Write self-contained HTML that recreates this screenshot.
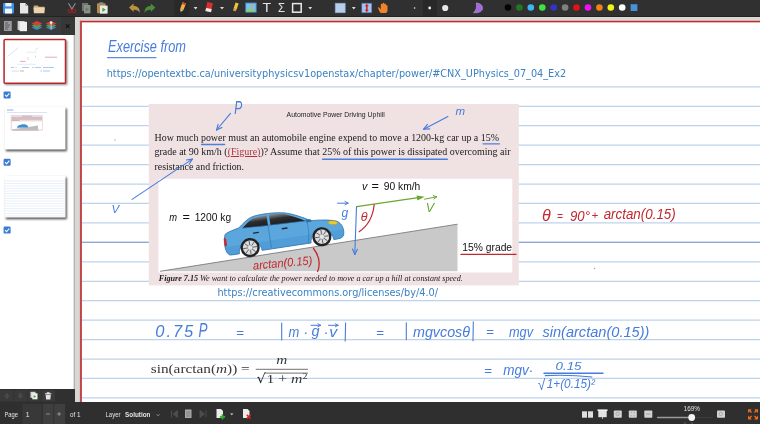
<!DOCTYPE html>
<html><head><meta charset="utf-8"><title>Xournal++</title>
<style>
*{box-sizing:border-box;margin:0;padding:0}
html,body{width:760px;height:424px;overflow:hidden;background:#d8d7d3;font-family:"Liberation Sans",sans-serif}
#app{position:relative;width:760px;height:424px;overflow:hidden}
.abs{position:absolute}
svg.abs{filter:blur(0.4px)}
#topbar{left:0;top:0;width:760px;height:17px;background:#303030;border-bottom:1px solid #232323}
#sidehead{left:0;top:17px;width:75px;height:18px;background:#3c3c3c}
#sideclose{left:61px;top:17px;width:14px;height:18px;background:#373737}
#sidebody{left:0;top:35px;width:74px;height:354px;background:#fff}
#sidefoot{left:0;top:389px;width:75px;height:14px;background:#303030}
#botbar{left:0;top:402px;width:760px;height:22px;background:#2f2f2f}
#page{left:81px;top:21.5px;width:700px;height:420px;background:#fff}
.rule{position:absolute;left:82px;width:678px;height:1.4px;background:#b5d1ec}
.ui{position:absolute;color:#dcdcdc;font-size:7px;line-height:1;white-space:nowrap}
</style></head><body><div id="app">
<div class="abs" id="page"></div>
<svg class="abs" style="left:0;top:0" width="760" height="424" viewBox="0 0 760 424"><rect x="79.9" y="20.8" width="700" height="1.55" fill="#c8282d"/><rect x="79.9" y="20.8" width="2.05" height="420" fill="#c2464a"/><g stroke="#bdd3ec" stroke-width="1.25"><path d="M82 86.85H760"/><path d="M82 106.29H760"/><path d="M82 125.73H760"/><path d="M82 145.17H760"/><path d="M82 164.61H760"/><path d="M82 184.05H760"/><path d="M82 203.49H760"/><path d="M82 222.93H760"/><path d="M82 242.37H760"/><path d="M82 261.81H760"/><path d="M82 281.25H760"/><path d="M82 300.69H760"/><path d="M82 320.13H760"/><path d="M82 339.57H760"/><path d="M82 359.01H760"/><path d="M82 378.45H760"/><path d="M82 397.89H760"/><path d="M82 242.3H760" stroke="#7d9dcd" stroke-width="1.1"/></g></svg>
<svg class="abs" style="left:0;top:0" width="760" height="424" viewBox="0 0 760 424">
<text x="108" y="51.7" font-size="16" font-family='"Liberation Sans",sans-serif' fill="#467cdc" textLength="78" lengthAdjust="spacingAndGlyphs" font-style="italic">Exercise from</text>
<line x1="107.5" y1="57.6" x2="156" y2="57.6" stroke="#5a8be0" stroke-width="1.2" stroke-linecap="round"/>
<text x="106.7" y="77" font-size="10" font-family='"DejaVu Sans","Liberation Sans",sans-serif' fill="#3a82c4" textLength="459.5" lengthAdjust="spacingAndGlyphs">https://opentextbc.ca/universityphysicsv1openstax/chapter/power/#CNX_UPhysics_07_04_Ex2</text>
<rect x="148.8" y="104" width="370" height="181.400" fill="#f0e1e3"/>
<rect x="158.5" y="178.7" width="353.8" height="93.8" fill="#ffffff"/>
<text x="286.6" y="117.4" font-size="6.9" font-family='"Liberation Sans",sans-serif' fill="#222" textLength="98.2" lengthAdjust="spacingAndGlyphs">Automotive Power Driving Uphill</text>
<text x="154.5" y="140.7" font-size="10" font-family='"Liberation Serif",serif' fill="#1a1a1a" textLength="344.5" lengthAdjust="spacingAndGlyphs">How much power must an automobile engine expend to move a 1200-kg car up a 15%</text>
<text x="154.5" y="155" font-size="10" font-family='"Liberation Serif",serif' fill="#1a1a1a" textLength="356" lengthAdjust="spacingAndGlyphs">grade at 90 km/h (<tspan fill="#a8363e" text-decoration="underline">(Figure)</tspan>)? Assume that 25% of this power is dissipated overcoming air</text>
<text x="154.5" y="169.7" font-size="10" font-family='"Liberation Serif",serif' fill="#1a1a1a" textLength="89.5" lengthAdjust="spacingAndGlyphs">resistance and friction.</text>
<line x1="201.6" y1="144.5" x2="224.7" y2="144.5" stroke="#4a80dd" stroke-width="1.4" stroke-linecap="round"/>
<line x1="483" y1="143.8" x2="499.5" y2="143.8" stroke="#4a80dd" stroke-width="1.3" stroke-linecap="round"/>
<line x1="322.6" y1="159.2" x2="447.4" y2="159.2" stroke="#4a80dd" stroke-width="1.4" stroke-linecap="round"/>
<polygon points="160,271.3 457.5,224.2 457.5,271.3" fill="#c9c9c9"/>
<polyline points="160,271.3 457.5,224.2" fill="none" stroke="#6f6f6f" stroke-width="0.8"/>
<g transform="translate(250.1 247.6) rotate(-8.6)">
<defs><linearGradient id="wg" x1="0" y1="0" x2="0" y2="1"><stop offset="0" stop-color="#8a8f94"/><stop offset="0.45" stop-color="#2b2d30"/><stop offset="1" stop-color="#1b1c1e"/></linearGradient></defs>
<path d="M-22.5 3 C-25.5 0 -25.5 -12 -22.5 -17 C-19 -19 -13 -20 -8.5 -21 C-3 -25 1 -28.500 6 -30 C14 -32 30 -31.300 40 -29 C47 -27 56 -22.500 64 -17.5 C74 -17 84 -15.5 90 -13 C94.5 -10 96 -4 94.5 1 C94 3.5 91 4.5 88 4.5 L84 4.5 C84 -9 61 -9 61 4.5 L11.5 4.5 C11.5 -9 -11.5 -9 -11.5 4.5 L-19 4.5 C-21 4.5 -22 4 -22.5 3 Z" fill="#5ba7dd" stroke="#2f74ae" stroke-width="0.8"/>
<path d="M-24.3 -4 L95.3 -4 L94.5 1.5 C93.5 4 91 4.5 88 4.5 L84 4.5 C84 -9 61 -9 61 4.5 L11.5 4.5 C11.5 -9 -11.5 -9 -11.5 4.5 L-19 4.5 C-22 4.5 -24 3 -24.3 -4 Z" fill="#3f8fcc" opacity="0.38"/>
<path d="M-4.5 -20.5 C0 -24 3.5 -27.200 7.5 -28.500 L21 -29.700 L21 -19 Z" fill="url(#wg)"/>
<path d="M23.5 -29.800 C31 -30 37 -28.800 40.5 -27.300 C46 -25.300 53 -21.500 58.5 -18 L23.5 -19 Z" fill="url(#wg)"/>
<path d="M21 -19 L21 3.5 M-5 -20.3 L60 -18 M60 -18 C61 -8 60 -2 58 4" fill="none" stroke="#2f74ae" stroke-width="0.6"/>
<rect x="5" y="-14.5" width="6" height="1.4" rx="0.5" fill="#1c2a38"/>
<rect x="34" y="-14.5" width="6" height="1.4" rx="0.5" fill="#1c2a38"/>
<path d="M59 -19.5 l5 0.6 l1 2.4 l-5.5 0z" fill="#2b6fa8"/>
<ellipse cx="85.5" cy="-12.3" rx="4.6" ry="1.9" fill="#f2c928" stroke="#b98d12" stroke-width="0.4" transform="rotate(12 85.5 -12.3)"/>
<rect x="-24.8" y="-13" width="2.4" height="8" rx="1" fill="#cc2b2b"/>
<g>
<circle cx="0" cy="0" r="9.6" fill="#222325"/>
<circle cx="0" cy="0" r="7.200" fill="#dcdddf"/>
<g stroke="#5a5b5e" stroke-width="0.900"><path d="M0 -7V7M-7 0H7M-5 -5L5 5M-5 5L5 -5"/></g>
<circle cx="0" cy="0" r="2.600" fill="#e4e4e6" stroke="#88898b" stroke-width="0.500"/>
</g>
<g transform="translate(72.6 0)">
<circle cx="0" cy="0" r="9.6" fill="#222325"/>
<circle cx="0" cy="0" r="7.200" fill="#dcdddf"/>
<g stroke="#5a5b5e" stroke-width="0.900"><path d="M0 -7V7M-7 0H7M-5 -5L5 5M-5 5L5 -5"/></g>
<circle cx="0" cy="0" r="2.600" fill="#e4e4e6" stroke="#88898b" stroke-width="0.500"/>
</g>
</g>

<text x="169.2" y="220.8" font-size="10.3" font-family='"Liberation Sans",sans-serif' fill="#111" textLength="7.8" lengthAdjust="spacingAndGlyphs" font-style="italic">m</text>
<text x="182.6" y="220.8" font-size="10.3" font-family='"Liberation Sans",sans-serif' fill="#111" textLength="7.4" lengthAdjust="spacingAndGlyphs">=</text>
<text x="194.7" y="220.8" font-size="10.3" font-family='"Liberation Sans",sans-serif' fill="#111" textLength="36.4" lengthAdjust="spacingAndGlyphs">1200 kg</text>
<text x="362" y="189.9" font-size="10.3" font-family='"Liberation Sans",sans-serif' fill="#111" textLength="5.4" lengthAdjust="spacingAndGlyphs" font-style="italic">v</text>
<text x="371.6" y="189.9" font-size="10.3" font-family='"Liberation Sans",sans-serif' fill="#111" textLength="7.4" lengthAdjust="spacingAndGlyphs">=</text>
<text x="383.7" y="189.9" font-size="10.3" font-family='"Liberation Sans",sans-serif' fill="#111" textLength="36.6" lengthAdjust="spacingAndGlyphs">90 km/h</text>
<text x="462.3" y="251.1" font-size="10.3" font-family='"Liberation Sans",sans-serif' fill="#111" textLength="49.8" lengthAdjust="spacingAndGlyphs">15% grade</text>
<line x1="461" y1="254.4" x2="516" y2="254.4" stroke="#c3272f" stroke-width="1.3" stroke-linecap="round"/>
<text x="158.8" y="280.7" font-size="8.15" font-family='"Liberation Serif",serif' fill="#1a1a1a" font-style="italic" textLength="304" lengthAdjust="spacingAndGlyphs"><tspan font-weight="bold">Figure 7.15</tspan> We want to calculate the power needed to move a car up a hill at constant speed.</text>
<text x="217.4" y="295.6" font-size="10" font-family='"DejaVu Sans","Liberation Sans",sans-serif' fill="#3a82c4" textLength="220.6" lengthAdjust="spacingAndGlyphs">https://creativecommons.org/licenses/by/4.0/</text>
<line x1="356.6" y1="206.7" x2="420" y2="197.4" stroke="#6aa72f" stroke-width="1.3" stroke-linecap="round"/>
<polygon points="424.6,196.7 416.6,195.4 417.4,200.6" fill="#6aa72f"/>
<text x="425.8" y="211.6" font-size="12.5" font-family='"Liberation Sans",sans-serif' fill="#6aa72f" font-style="italic">V</text>
<line x1="424.6" y1="199.2" x2="436.6" y2="196.8" stroke="#6aa72f" stroke-width="1.0" stroke-linecap="round"/>
<line x1="436.6" y1="196.8" x2="433.3" y2="195.7" stroke="#6aa72f" stroke-width="1.0" stroke-linecap="round"/>
<line x1="436.6" y1="196.8" x2="434.0" y2="199.1" stroke="#6aa72f" stroke-width="1.0" stroke-linecap="round"/>
<line x1="356.5" y1="206.7" x2="354.8" y2="254.5" stroke="#467cdc" stroke-width="1.1" stroke-linecap="round"/>
<line x1="354.8" y1="254.5" x2="357.5" y2="249.2" stroke="#467cdc" stroke-width="1.1" stroke-linecap="round"/>
<line x1="354.8" y1="254.5" x2="352.5" y2="249.0" stroke="#467cdc" stroke-width="1.1" stroke-linecap="round"/>
<line x1="337.6" y1="203.2" x2="348" y2="203.2" stroke="#467cdc" stroke-width="1.0" stroke-linecap="round"/>
<line x1="348" y1="203.2" x2="345.0" y2="201.4" stroke="#467cdc" stroke-width="1.0" stroke-linecap="round"/>
<line x1="348" y1="203.2" x2="345.0" y2="204.9" stroke="#467cdc" stroke-width="1.0" stroke-linecap="round"/>
<text x="341.5" y="217.3" font-size="12" font-family='"Liberation Sans",sans-serif' fill="#467cdc" font-style="italic">g</text>
<text x="360.7" y="221.3" font-size="12.5" font-family='"Liberation Sans",sans-serif' fill="#c3272f" font-style="italic">θ</text>
<path d="M374.2 204.3 Q372.5 223 358.8 232" fill="none" stroke="#c3272f" stroke-width="1.2"/>
<text x="253.3" y="269.7" font-size="12" font-family='"Liberation Sans",sans-serif' fill="#c3272f" textLength="59.5" lengthAdjust="spacingAndGlyphs" font-style="italic" transform="translate(253.3 269.7) rotate(-5.2) skewX(0) translate(-253.3 -269.7)">arctan(0.15)</text>
<path d="M313.2 248 Q322.5 260 317.4 272" fill="none" stroke="#c3272f" stroke-width="1.3"/>
<circle cx="114.9" cy="139.9" r="0.7" fill="#8aa0c8"/><circle cx="594.5" cy="268.5" r="0.7" fill="#8aa0c8"/>
<text x="234.3" y="113.8" font-size="18" font-family='"Liberation Sans",sans-serif' fill="#467cdc" textLength="8" lengthAdjust="spacingAndGlyphs" font-style="italic">P</text>
<line x1="230.5" y1="113.4" x2="216.6" y2="130" stroke="#467cdc" stroke-width="1.1" stroke-linecap="round"/>
<line x1="216.6" y1="130" x2="222.0" y2="127.5" stroke="#467cdc" stroke-width="1.1" stroke-linecap="round"/>
<line x1="216.6" y1="130" x2="218.1" y2="124.2" stroke="#467cdc" stroke-width="1.1" stroke-linecap="round"/>
<text x="455.5" y="115.3" font-size="11.5" font-family='"Liberation Sans",sans-serif' fill="#467cdc" font-style="italic">m</text>
<line x1="447.9" y1="116.6" x2="423.7" y2="129.2" stroke="#467cdc" stroke-width="1.1" stroke-linecap="round"/>
<line x1="423.7" y1="129.2" x2="429.7" y2="128.9" stroke="#467cdc" stroke-width="1.1" stroke-linecap="round"/>
<line x1="423.7" y1="129.2" x2="427.4" y2="124.4" stroke="#467cdc" stroke-width="1.1" stroke-linecap="round"/>
<text x="111.5" y="213.2" font-size="11.5" font-family='"Liberation Sans",sans-serif' fill="#467cdc" font-style="italic">V</text>
<line x1="132.1" y1="199.4" x2="192.3" y2="159.1" stroke="#467cdc" stroke-width="1.1" stroke-linecap="round"/>
<line x1="192.3" y1="159.1" x2="186.4" y2="160.0" stroke="#467cdc" stroke-width="1.1" stroke-linecap="round"/>
<line x1="192.3" y1="159.1" x2="189.2" y2="164.2" stroke="#467cdc" stroke-width="1.1" stroke-linecap="round"/>
<text x="542" y="220.5" font-size="16" font-family='"Liberation Sans",sans-serif' fill="#c3272f" font-style="italic">θ</text>
<text x="557" y="220" font-size="10" font-family='"Liberation Sans",sans-serif' fill="#c3272f" font-style="italic">=</text>
<text x="570" y="221" font-size="15.5" font-family='"Liberation Sans",sans-serif' fill="#c3272f" textLength="20" lengthAdjust="spacingAndGlyphs" font-style="italic">90°</text>
<text x="591.5" y="219.3" font-size="11.5" font-family='"Liberation Sans",sans-serif' fill="#c3272f" font-style="italic">+</text>
<text x="603.7" y="219.3" font-size="14.5" font-family='"Liberation Sans",sans-serif' fill="#c3272f" textLength="72" lengthAdjust="spacingAndGlyphs" font-style="italic">arctan(0.15)</text>
<text x="155.3" y="336.8" font-size="16.5" font-family='"Liberation Sans",sans-serif' fill="#467cdc" textLength="38" lengthAdjust="spacing" font-style="italic">0.75</text>
<text x="198.5" y="337.4" font-size="21" font-family='"Liberation Sans",sans-serif' fill="#467cdc" textLength="9" lengthAdjust="spacingAndGlyphs" font-style="italic">P</text>
<text x="236" y="336.6" font-size="13.5" font-family='"Liberation Sans",sans-serif' fill="#467cdc" font-style="italic">=</text>
<line x1="281.7" y1="323" x2="281.7" y2="340" stroke="#467cdc" stroke-width="1.1" stroke-linecap="round"/>
<text x="288.6" y="336.8" font-size="15.5" font-family='"Liberation Sans",sans-serif' fill="#467cdc" textLength="10.8" lengthAdjust="spacingAndGlyphs" font-style="italic">m</text>
<text x="303.2" y="336.8" font-size="15" font-family='"Liberation Sans",sans-serif' fill="#467cdc" font-style="italic">·</text>
<text x="311.5" y="336.2" font-size="15" font-family='"Liberation Sans",sans-serif' fill="#467cdc" textLength="8" lengthAdjust="spacingAndGlyphs" font-style="italic">g</text>
<text x="323.6" y="336.8" font-size="15" font-family='"Liberation Sans",sans-serif' fill="#467cdc" font-style="italic">·</text>
<text x="329.3" y="336.8" font-size="15.5" font-family='"Liberation Sans",sans-serif' fill="#467cdc" textLength="8" lengthAdjust="spacingAndGlyphs" font-style="italic">v</text>
<line x1="311" y1="325.3" x2="320.5" y2="325.3" stroke="#467cdc" stroke-width="1.0" stroke-linecap="round"/>
<line x1="320.5" y1="325.3" x2="317.9" y2="323.8" stroke="#467cdc" stroke-width="1.0" stroke-linecap="round"/>
<line x1="320.5" y1="325.3" x2="317.9" y2="326.8" stroke="#467cdc" stroke-width="1.0" stroke-linecap="round"/>
<line x1="328.5" y1="325.3" x2="338" y2="325.3" stroke="#467cdc" stroke-width="1.0" stroke-linecap="round"/>
<line x1="338" y1="325.3" x2="335.4" y2="323.8" stroke="#467cdc" stroke-width="1.0" stroke-linecap="round"/>
<line x1="338" y1="325.3" x2="335.4" y2="326.8" stroke="#467cdc" stroke-width="1.0" stroke-linecap="round"/>
<line x1="345.6" y1="323" x2="345.2" y2="341" stroke="#467cdc" stroke-width="1.1" stroke-linecap="round"/>
<text x="376" y="336.6" font-size="13.5" font-family='"Liberation Sans",sans-serif' fill="#467cdc" font-style="italic">=</text>
<line x1="406.3" y1="322.8" x2="406.3" y2="339.6" stroke="#467cdc" stroke-width="1.1" stroke-linecap="round"/>
<text x="413" y="336.6" font-size="15.5" font-family='"Liberation Sans",sans-serif' fill="#467cdc" textLength="57" lengthAdjust="spacingAndGlyphs" font-style="italic">mgvcosθ</text>
<line x1="473.3" y1="321.7" x2="473" y2="340.8" stroke="#467cdc" stroke-width="1.1" stroke-linecap="round"/>
<text x="486" y="336.2" font-size="13.5" font-family='"Liberation Sans",sans-serif' fill="#467cdc" font-style="italic">=</text>
<text x="509" y="336.6" font-size="15.5" font-family='"Liberation Sans",sans-serif' fill="#467cdc" textLength="24" lengthAdjust="spacingAndGlyphs" font-style="italic">mgv</text>
<text x="542.4" y="336.6" font-size="15.5" font-family='"Liberation Sans",sans-serif' fill="#467cdc" textLength="107" lengthAdjust="spacingAndGlyphs" font-style="italic">sin(arctan(0.15))</text>
<text x="484" y="374.8" font-size="13.5" font-family='"Liberation Sans",sans-serif' fill="#467cdc" font-style="italic">=</text>
<text x="503.2" y="374.7" font-size="15.5" font-family='"Liberation Sans",sans-serif' fill="#467cdc" textLength="30" lengthAdjust="spacingAndGlyphs" font-style="italic">mgv·</text>
<text x="555.5" y="369.6" font-size="11.5" font-family='"Liberation Sans",sans-serif' fill="#467cdc" textLength="26" lengthAdjust="spacingAndGlyphs" font-style="italic">0.15</text>
<line x1="544" y1="373.3" x2="603" y2="373.2" stroke="#467cdc" stroke-width="1.4" stroke-linecap="round"/>
<text x="537.8" y="389.6" font-size="15" font-family='"Liberation Sans",sans-serif' fill="#467cdc" textLength="7.5" lengthAdjust="spacingAndGlyphs" font-style="italic">√</text>
<path d="M544.8 375.6 Q570 374.6 592.2 377" fill="none" stroke="#467cdc" stroke-width="1.1"/>
<text x="546.8" y="388.2" font-size="12.5" font-family='"Liberation Sans",sans-serif' fill="#467cdc" textLength="48" lengthAdjust="spacingAndGlyphs" font-style="italic">1+(0.15)²</text>
<text x="150.7" y="373" font-size="13.4" font-family='"Liberation Serif",serif' fill="#383838" textLength="99" lengthAdjust="spacingAndGlyphs">sin(arctan(<tspan font-style="italic">m</tspan>)) =</text>
<line x1="256.2" y1="369.3" x2="307.6" y2="369.3" stroke="#333" stroke-width="0.7" stroke-linecap="round"/>
<text x="276.2" y="364" font-size="13.4" font-family='"Liberation Serif",serif' fill="#383838" textLength="11" lengthAdjust="spacingAndGlyphs" font-style="italic">m</text>
<text x="256.6" y="383.4" font-size="13.4" font-family='"DejaVu Serif","Liberation Serif",serif' fill="#222" textLength="9.5" lengthAdjust="spacingAndGlyphs">√</text>
<line x1="265.5" y1="373.1" x2="307.6" y2="373.1" stroke="#333" stroke-width="0.7" stroke-linecap="round"/>
<text x="266.5" y="383" font-size="13.4" font-family='"Liberation Serif",serif' fill="#383838" textLength="41" lengthAdjust="spacingAndGlyphs">1 + <tspan font-style="italic">m</tspan><tspan dy="-4.5" font-size="8.5">2</tspan></text>
</svg>
<div class="abs" id="topbar"></div>
<div class="abs" id="sidehead"></div>
<div class="abs" id="sideclose"></div>
<div class="abs" id="sidebody"></div>
<div class="abs" id="sidefoot"></div>
<div class="abs" id="botbar"></div>
<svg class="abs" style="left:0;top:0" width="760" height="424" viewBox="0 0 760 424">
<defs>
<filter id="sh" x="-10%" y="-10%" width="125%" height="130%"><feGaussianBlur stdDeviation="0.9"/></filter>
<symbol id="dd" viewBox="0 0 4 3"><path d="M0 0h4l-2 2.4z" fill="#d8d8d8"/></symbol>
</defs>
<!-- ===== top toolbar icons ===== -->
<g id="tb">
<!-- save -->
<rect x="3" y="3" width="11" height="10.5" rx="1" fill="#3f8fe8"/><rect x="5.3" y="3" width="6.2" height="3.4" fill="#e9f1fb"/><rect x="5" y="8.6" width="7" height="4.9" fill="#f3f7fc"/>
<!-- new -->
<path d="M20 3h5.2l3 3v7.5h-8.2z" fill="#e6e6e6"/><path d="M25.2 3v3h3z" fill="#a9a9a9"/>
<!-- open -->
<path d="M33.800 5.500h4l1 1.200h5.700v1.200h-10.700z" fill="#caa679"/><path d="M33.400 7.400h11.500l-.500 5.800h-10.500z" fill="#ecd4ae"/>
<!-- cut -->
<path d="M68.400 3.200l3.700 6.200M75.400 3.200l-3.700 6.200" stroke="#8c8c8c" stroke-width="1.100" fill="none"/><circle cx="69.700" cy="11" r="1.700" fill="none" stroke="#9c2222" stroke-width="1.100"/><circle cx="74.100" cy="11" r="1.700" fill="none" stroke="#9c2222" stroke-width="1.100"/>
<!-- copy -->
<rect x="82" y="3" width="6.200" height="8" fill="#747474"/><rect x="84" y="5" width="6.400" height="8.400" fill="#8e8e8e"/><path d="M85.800 7.500l3.200 1.900-3.200 1.900z" fill="#3a9a3a"/>
<!-- paste -->
<rect x="97" y="3.2" width="8.6" height="10" rx="0.8" fill="#b28a52"/><rect x="99.3" y="2.2" width="4" height="2.2" rx="0.6" fill="#8a8a8a"/><rect x="100" y="5.6" width="7.6" height="8" fill="#ededed"/><path d="M102.3 7.6l3.6 2.2-3.6 2.2z" fill="#3fae3f"/>
<!-- undo -->
<path d="M129 7.6l4.6-4v2.3c4.2 0 6.4 2.4 6.2 7.2-1-2.6-2.8-3.4-6.2-3.4v2.2z" fill="#b8923c"/>
<!-- redo -->
<path d="M155.4 7.6l-4.6-4v2.3c-4.2 0-6.4 2.4-6.2 7.2 1-2.6 2.8-3.4 6.2-3.4v2.2z" fill="#4a8c3a"/>
<!-- pen (selected bg) -->
<rect x="174.500" y="0" width="15" height="16" fill="#292929"/>
<path d="M182.600 2.200l3.300 1.200-2.400 6.600-3.300-1.200z" fill="#f1b63a"/><path d="M182.600 2.200l3.300 1.200-.700 1.900-3.300-1.200z" fill="#d8463c"/><path d="M180.200 8.800l3.300 1.200-2.900 2.300z" fill="#e6c89a"/><path d="M180.500 12.400l.050-1.300 1 .400z" fill="#222"/>
<use href="#dd" x="193.600" y="7" width="4" height="3"/>
<!-- eraser -->
<path d="M207.300 2l5.600 1.200-1.900 9-5.600-1.200z" fill="#d9302f"/><path d="M206.100 7.900l5.600 1.200-.700 3.100-5.600-1.200z" fill="#ececec"/>
<use href="#dd" x="220" y="7" width="4" height="3"/>
<!-- highlighter -->
<path d="M235.600 2.400l3 1-2 6-3-1z" fill="#f2c33a"/><path d="M233.700 8.300l2.800 1-.800 2.300-2.800-1z" fill="#caa052"/><path d="M233 10.700l2.600.900-1.300 1.500-1.600-.500z" fill="#3a3326"/>
<!-- image -->
<rect x="245.300" y="2.600" width="11.300" height="10" fill="#4592e4"/><rect x="246.300" y="3.600" width="9.300" height="8" fill="#79c2f4"/><path d="M246.300 11.600v-1.600l2.600-2.400 2.400 2 1.800-1.200 2.500 2v1.200z" fill="#8dcf6a"/><circle cx="252" cy="5.500" r="1.300" fill="#f0a236"/>
<!-- T -->
<text x="266.700" y="12.300" font-family='"Liberation Sans",sans-serif' font-size="12.300" fill="#e4e4e4" text-anchor="middle" textLength="8.600" lengthAdjust="spacingAndGlyphs">T</text>
<!-- sigma -->
<text x="281.400" y="12.300" font-family='"Liberation Sans",sans-serif' font-size="12.300" fill="#e4e4e4" text-anchor="middle" textLength="7" lengthAdjust="spacingAndGlyphs">Σ</text>
<!-- rect -->
<rect x="292.6" y="3.6" width="8.6" height="8.6" fill="none" stroke="#e9e9e9" stroke-width="1.5"/>
<use href="#dd" x="308.2" y="7" width="4" height="3"/>
<!-- select rect -->
<rect x="335.2" y="3.2" width="10" height="9.6" fill="#b7cdec" stroke="#86a6d8" stroke-width="0.6"/>
<use href="#dd" x="351.8" y="7" width="4" height="3"/>
<!-- vertical space -->
<rect x="361.8" y="3.2" width="10" height="9.6" fill="#a9c4ea" stroke="#3f6fc0" stroke-width="0.6"/><path d="M366.8 3.8l2 2.4h-1.2v3.6h1.2l-2 2.4-2-2.4h1.2v-3.6h-1.2z" fill="#cf2222"/>
<!-- hand -->
<path d="M377.800 7.600c.600-.600 1.500-.400 1.900.300l1.100 1.700v-5a.85.85 0 0 1 1.700 0v3.200-4.100a.85.85 0 0 1 1.700 0v4.100-3.500a.85.85 0 0 1 1.700 0v3.700-2.200a.8.8 0 0 1 1.600 0v4.600c0 1.900-1.300 2.700-3.100 2.700h-2.300c-1.200 0-2-.500-2.600-1.500z" fill="#f0842a"/>
<!-- dots sizes -->
<circle cx="414.6" cy="8" r="0.8" fill="#eee"/>
<rect x="423" y="0" width="14" height="16" fill="#282828"/>
<circle cx="429.7" cy="8" r="1.4" fill="#eee"/>
<circle cx="445.2" cy="8" r="3.1" fill="#e9e9e9"/>
<!-- fill moon -->
<path d="M476.300 3c3.800 0 6.400 2.400 6.300 5.300-.100 3-3.600 4.900-9.100 4.400 2.500-2 3.600-5.400 2.800-9.700z" fill="#a36ade" stroke="#c6a3ef" stroke-width="0.500"/>
<!-- colors -->
<circle cx="508" cy="7.500" r="3.300" fill="#050505"/>
<circle cx="519.4" cy="7.500" r="3.300" fill="#1f7a1f"/>
<circle cx="530.8" cy="7.500" r="3.300" fill="#3db7f0"/>
<circle cx="542.3" cy="7.500" r="3.300" fill="#3fe33f"/>
<circle cx="553.7" cy="7.500" r="3.300" fill="#3333c8"/>
<circle cx="565.1" cy="7.500" r="3.300" fill="#808080"/>
<circle cx="576.5" cy="7.500" r="3.300" fill="#e51212"/>
<circle cx="588" cy="7.500" r="3.300" fill="#f012f0"/>
<circle cx="599.4" cy="7.500" r="3.300" fill="#f08214"/>
<circle cx="610.8" cy="7.500" r="3.300" fill="#f2f214"/>
<circle cx="622.2" cy="7.500" r="3.300" fill="#ffffff"/>
<rect x="630.6" y="4.200" width="6.800" height="6.800" fill="#4a90d9"/>
</g>
<!-- ===== sidebar header icons ===== -->
<g id="sh2">
<rect x="4" y="21" width="7.800" height="10" fill="#9a9c9f"/><path d="M5 23h3M5 25h5M5 27h4M5 29h3" stroke="#54565a" stroke-width="0.900"/>
<rect x="17.600" y="21" width="7" height="9" fill="#cfcfcf"/><rect x="19.600" y="21.800" width="7.400" height="9.400" fill="#f1f1f1"/>
<path d="M31.600 27.400l5.300-2.400 5.300 2.400-5.300 2.600z" fill="#3f83d6"/><path d="M31.600 25.400l5.300-2.400 5.300 2.400-5.300 2.600z" fill="#3fae3f"/><path d="M31.600 23.400l5.300-2.400 5.300 2.400-5.300 2.600z" fill="#e23a3a"/>
<path d="M45.800 27.400l5.300-2.400 5.300 2.400-5.300 2.600z" fill="#3f83d6"/><path d="M45.800 25.400l5.300-2.400 5.300 2.400-5.300 2.600z" fill="#3fae3f"/><path d="M45.800 23.400l5.300-2.400 5.300 2.400-5.300 2.600z" fill="#e23a3a"/><rect x="50.500" y="23" width="1.300" height="6.500" fill="#b9b9b9"/><circle cx="51.100" cy="22.600" r="1.300" fill="#efefef"/>
<path d="M65.900 24.400l3.500 3.500M69.400 24.400l-3.500 3.500" stroke="#111" stroke-width="1.100"/>
</g>
<!-- ===== thumbnails ===== -->
<g id="thumbs">
<rect x="4.800" y="40.500" width="62.500" height="44.500" fill="#000" opacity="0.45" filter="url(#sh)"/>
<rect x="4.100" y="39.600" width="61.400" height="43.600" rx="1" fill="#fff" stroke="#b9262a" stroke-width="1.500"/>
<rect x="5.800" y="108.500" width="61" height="42.700" fill="#000" opacity="0.700" filter="url(#sh)"/>
<rect x="4.500" y="107" width="61" height="42.500" fill="#fff"/>
<rect x="5.800" y="177.500" width="61" height="41.700" fill="#000" opacity="0.700" filter="url(#sh)"/>
<rect x="4.500" y="176" width="61" height="41.500" fill="#fff"/>
<!-- thumb1 content -->
<g opacity="0.55">
<path d="M7.500 56.500l11-9M35 50l3.500-2.300" stroke="#6f9be6" stroke-width="0.500"/>
<path d="M26 52.200h11" stroke="#aaa" stroke-width="0.400"/>
<path d="M45 57.200h12" stroke="#d0565b" stroke-width="0.900"/>
<path d="M20 61.400h5.500" stroke="#d0565b" stroke-width="0.900"/>
<path d="M28 57v3" stroke="#6f9be6" stroke-width="0.600"/><path d="M35.500 55.500v2" stroke="#6aa72f" stroke-width="0.600"/>
<path d="M17 64.300h19" stroke="#8fb6e0" stroke-width="0.500"/>
<path d="M11 67.500h3M15.500 67.500h1M22 67.500h7M32 67.500h1.500M35 67.500h6M43 67.500h11" stroke="#5f8fe0" stroke-width="0.900"/>
<path d="M11.500 71h7.500" stroke="#bbb" stroke-width="0.900"/><path d="M20 71h4" stroke="#777" stroke-width="0.900"/><path d="M40.500 71h1.500M43 71h7" stroke="#5f8fe0" stroke-width="0.900"/>
</g>
<!-- thumb2 content -->
<path d="M7 110h6.500" stroke="#5b8fe0" stroke-width="1" opacity="0.700"/><path d="M7 112.300h40" stroke="#7fb0e6" stroke-width="0.500" opacity="0.800"/>
<rect x="10.700" y="115" width="32.200" height="15.600" fill="#efd9dc"/><rect x="12" y="121.400" width="30" height="8" fill="#fff"/>
<path d="M22 116.200h10" stroke="#8a7a7c" stroke-width="0.400"/>
<path d="M11.500 117.800h30.500M11.500 119.100h30.500M11.500 120.400h8" stroke="#8a7a7c" stroke-width="0.500" opacity="0.800"/>
<path d="M13 129.200l25-3.600v3.600z" fill="#bdbdbd"/><path d="M17 127.800c0-2 2-3 4.500-3.400 3-.400 5.500.200 6.500 1.800l-.300 1.300z" fill="#3f8fd0"/>
<path d="M12.500 130h26" stroke="#6a5a5c" stroke-width="0.500"/>
<!-- thumb3 lines -->
<g stroke="#cfe0f3" stroke-width="0.450">
<path d="M4.500 181h61M4.500 183.500h61M4.500 186h61M4.500 188.500h61M4.500 191h61M4.500 193.500h61M4.500 196h61M4.500 198.500h61M4.500 201h61M4.500 203.500h61M4.500 206h61M4.500 208.500h61M4.500 211h61M4.500 213.500h61M4.500 216h61"/></g>
<rect x="73.700" y="35" width="0.900" height="354" fill="#9c9c9c"/>
<!-- checkboxes -->
<g id="cb">
<rect x="3.600" y="91.400" width="7" height="7" rx="1.200" fill="#3a7bd5"/><path d="M5.100 94.900l1.500 1.600 2.700-3.200" stroke="#fff" stroke-width="1.100" fill="none"/>
<rect x="3.600" y="158.700" width="7" height="7" rx="1.200" fill="#3a7bd5"/><path d="M5.100 162.200l1.500 1.600 2.700-3.200" stroke="#fff" stroke-width="1.100" fill="none"/>
<rect x="3.600" y="226.600" width="7" height="7" rx="1.200" fill="#3a7bd5"/><path d="M5.100 230.100l1.500 1.600 2.700-3.200" stroke="#fff" stroke-width="1.100" fill="none"/>
</g>
</g>
<!-- ===== sidebar footer icons ===== -->
<g id="sf">
<rect x="0" y="390" width="55" height="11.500" fill="#393939"/><path d="M13.800 390v11.500M27.600 390v11.500M41.400 390v11.500" stroke="#2e2e2e" stroke-width="0.700"/>
<path d="M7 393l3.200 3.400h-2v2.400h-2.400v-2.400h-2z" fill="#4a4a4a"/>
<path d="M20.400 398.800l3.200-3.400h-2v-2.400h-2.400v2.400h-2z" fill="#4a4a4a"/>
<rect x="30.500" y="391.800" width="5" height="6" fill="#d9d9d9"/><rect x="32.300" y="393.300" width="5.200" height="6" fill="#f1f1f1"/><path d="M33.600 395l2.600 1.500-2.600 1.500z" fill="#3fae3f"/>
<path d="M45 393.300h6.400v1h-6.400zM46.800 392.300h2.800v1h-2.800zM45.600 394.800h5.200l-.5 4.600h-4.200z" fill="#e4e4e4"/>
</g>
<!-- ===== bottom bar ===== -->
<g id="bb" font-family='"Liberation Sans",sans-serif' font-size="6.800" fill="#e2e2e2">
<text x="4.500" y="416.600" textLength="13.500" lengthAdjust="spacingAndGlyphs">Page</text>
<rect x="22.400" y="404" width="19.600" height="20" fill="#383838"/>
<text x="25.800" y="416.600">1</text>
<rect x="42.400" y="404" width="22.600" height="20" fill="#3f3f3f"/>
<path d="M53.700 404v20M42.200 404v20" stroke="#2c2c2c" stroke-width="0.700"/>
<path d="M46.200 414h3.600M57.200 414h3.800M59.100 412.100v3.800" stroke="#9a9a9a" stroke-width="0.900"/>
<text x="70" y="416.600" textLength="10.500" lengthAdjust="spacingAndGlyphs">of 1</text>
<text x="105.500" y="416.600" textLength="15" lengthAdjust="spacingAndGlyphs">Layer</text>
<text x="125" y="416.600" font-weight="bold" textLength="25.500" lengthAdjust="spacingAndGlyphs">Solution</text>
<path d="M156.800 414.400l1.300 1.300 1.300-1.300" stroke="#cfcfcf" stroke-width="0.700" fill="none"/>
<!-- layer nav icons -->
<path d="M171.500 410.500v7M177.500 410.500l-4.500 3.500 4.500 3.500z" stroke="#4c4c4c" fill="#4c4c4c" stroke-width="1"/>
<rect x="185" y="409.500" width="6.500" height="8.500" fill="#a9a9a9"/><path d="M186.200 412h4M186.200 414h4M186.200 416h4" stroke="#6a6a6a" stroke-width="0.700"/>
<path d="M206 410.500v7M200 410.500l4.500 3.500-4.500 3.500z" stroke="#4c4c4c" fill="#4c4c4c" stroke-width="1"/>
<path d="M216.500 409h4.500l2 2v7h-6.500z" fill="#ececec"/><path d="M222.500 414.200v5.200M219.900 416.800h5.200" stroke="#2fae2f" stroke-width="1.700"/>
<use href="#dd" x="230" y="413.200" width="3.600" height="2.700"/>
<path d="M243 409h4.500l2 2v7h-6.500z" fill="#ececec"/><path d="M246.800 414.800l3.800 3.800M250.600 414.800l-3.800 3.800" stroke="#e01f1f" stroke-width="1.500"/>
<!-- right icons -->
<rect x="582" y="411.300" width="5" height="6.400" fill="#dedede"/><rect x="588" y="411.300" width="5" height="6.400" fill="#dedede"/>
<rect x="597.500" y="409.400" width="10" height="1.600" fill="#f2f2f2"/><rect x="598.300" y="411" width="8.400" height="6.200" fill="#e4e4e4"/><path d="M602.500 417.200v1.800" stroke="#ddd" stroke-width="0.800"/>
<rect x="613.800" y="410.500" width="8" height="7.200" rx="0.800" fill="#d2d2d2"/><circle cx="617.600" cy="413.900" r="1.700" fill="none" stroke="#9a9a9a" stroke-width="0.700"/>
<rect x="628.800" y="410.500" width="8" height="7.200" rx="0.800" fill="#d2d2d2"/><path d="M630.500 412.300h1.600M633.500 412.300h1.600M630.500 415.800h1.600M633.500 415.800h1.600" stroke="#9a9a9a" stroke-width="0.700"/>
<rect x="644.300" y="410.500" width="8" height="7.200" rx="0.800" fill="#d2d2d2"/><path d="M646 414.100h4.600" stroke="#9a9a9a" stroke-width="0.800"/>
<rect x="656.800" y="416.700" width="35" height="1.600" rx="0.800" fill="#9a9a9a"/><rect x="691.800" y="416.900" width="21" height="1.200" rx="0.600" fill="#3d3d3d"/>
<circle cx="691.700" cy="417.500" r="3.400" fill="#f4f4f4"/>
<text x="683.800" y="411" font-size="6.300" textLength="16.200" lengthAdjust="spacingAndGlyphs">169%</text>
<path d="M685 422.300v1.700M692 422.300v1.700" stroke="#8a8a8a" stroke-width="0.600"/>
<rect x="717" y="410.500" width="8" height="7.200" rx="0.800" fill="#d2d2d2"/><circle cx="720.800" cy="413.900" r="1.700" fill="none" stroke="#9a9a9a" stroke-width="0.700"/>
<g fill="#ee6a1c"><path d="M748 409.200h3.800l-1.300 1.300 1.500 1.500-1 1-1.500-1.500-1.500 1.400z"/><path d="M758 409.200h-3.800l1.300 1.300-1.500 1.500 1 1 1.500-1.500 1.500 1.400z"/><path d="M748 419.400h3.800l-1.300-1.300 1.500-1.500-1-1-1.500 1.500-1.500-1.400z"/><path d="M758 419.400h-3.800l1.300-1.300-1.500-1.500 1-1 1.500 1.500 1.500-1.400z"/></g>
</g>
</svg>
</div></body></html>
